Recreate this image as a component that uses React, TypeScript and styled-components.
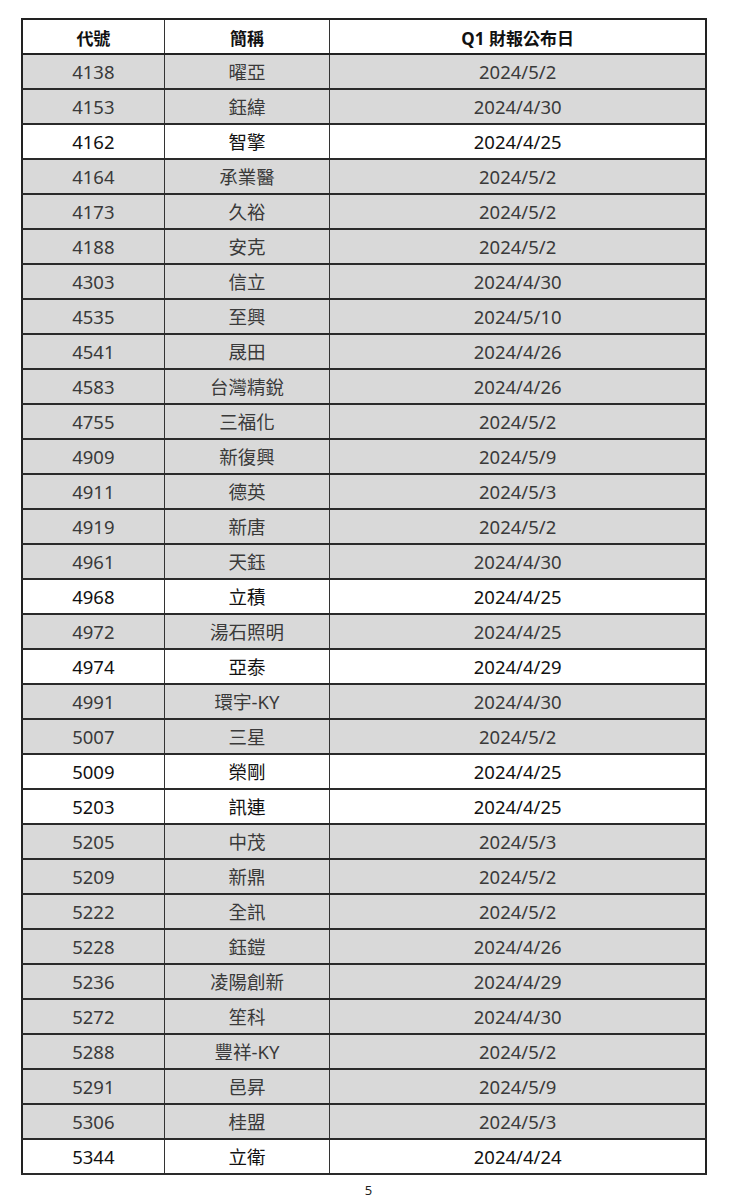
import React from "react";
import styled, { createGlobalStyle } from "styled-components";

const GlobalStyle = createGlobalStyle`
  html, body {
    margin: 0;
    padding: 0;
    background: #fff;
  }
  body {
    font-family: "Noto Sans", "Noto Sans CJK TC", sans-serif;
    color: #111;
  }
`;

const Page = styled.div`
  width: 736px;
  height: 1201px;
  box-sizing: border-box;
  padding: 18px 0 0 21px;
  display: flex;
  flex-direction: column;
`;

const Table = styled.table`
  width: 686px;
  border-collapse: collapse;
  table-layout: fixed;
  border: 2px solid #222;
`;

const Th = styled.th<{ $w: string }>`
  width: ${(p) => p.$w};
  height: 32px;
  padding: 1px 0 0;
  border: 1.5px solid #333;
  border-bottom: 2px solid #222;
  font-size: 17px;
  font-weight: 700;
  text-align: center;
  color: #111;
  background: #fff;
`;

const Row = styled.tr<{ $shade: boolean }>`
  background: ${(p) => (p.$shade ? "#d9d9d9" : "#fff")};
  color: ${(p) => (p.$shade ? "#3a3a3a" : "#111")};
`;

const Td = styled.td`
  height: 31px;
  padding: 2px 0 0;
  border-left: 1.5px solid #333;
  border-right: 1.5px solid #333;
  border-bottom: 2px solid #2a2a2a;
  font-size: 18.5px;
  text-align: center;
  line-height: 1;
`;

const PageNo = styled.div`
  margin-top: 6px;
  width: 695px;
  text-align: center;
  font-size: 13px;
  color: #222;
`;

type Item = [string, string, string, boolean];

const rows: Item[] = [
  ["4138", "曜亞", "2024/5/2", true],
  ["4153", "鈺緯", "2024/4/30", true],
  ["4162", "智擎", "2024/4/25", false],
  ["4164", "承業醫", "2024/5/2", true],
  ["4173", "久裕", "2024/5/2", true],
  ["4188", "安克", "2024/5/2", true],
  ["4303", "信立", "2024/4/30", true],
  ["4535", "至興", "2024/5/10", true],
  ["4541", "晟田", "2024/4/26", true],
  ["4583", "台灣精銳", "2024/4/26", true],
  ["4755", "三福化", "2024/5/2", true],
  ["4909", "新復興", "2024/5/9", true],
  ["4911", "德英", "2024/5/3", true],
  ["4919", "新唐", "2024/5/2", true],
  ["4961", "天鈺", "2024/4/30", true],
  ["4968", "立積", "2024/4/25", false],
  ["4972", "湯石照明", "2024/4/25", true],
  ["4974", "亞泰", "2024/4/29", false],
  ["4991", "環宇-KY", "2024/4/30", true],
  ["5007", "三星", "2024/5/2", true],
  ["5009", "榮剛", "2024/4/25", false],
  ["5203", "訊連", "2024/4/25", false],
  ["5205", "中茂", "2024/5/3", true],
  ["5209", "新鼎", "2024/5/2", true],
  ["5222", "全訊", "2024/5/2", true],
  ["5228", "鈺鎧", "2024/4/26", true],
  ["5236", "凌陽創新", "2024/4/29", true],
  ["5272", "笙科", "2024/4/30", true],
  ["5288", "豐祥-KY", "2024/5/2", true],
  ["5291", "邑昇", "2024/5/9", true],
  ["5306", "桂盟", "2024/5/3", true],
  ["5344", "立衛", "2024/4/24", false],
];

export default function App() {
  return (
    <>
      <GlobalStyle />
      <Page>
        <Table>
          <thead>
            <tr>
              <Th $w="20.7%">代號</Th>
              <Th $w="24.2%">簡稱</Th>
              <Th $w="55.1%">Q1 財報公布日</Th>
            </tr>
          </thead>
          <tbody>
            {rows.map(([code, name, date, shade]) => (
              <Row key={code} $shade={shade}>
                <Td>{code}</Td>
                <Td>{name}</Td>
                <Td>{date}</Td>
              </Row>
            ))}
          </tbody>
        </Table>
        <PageNo>5</PageNo>
      </Page>
    </>
  );
}
